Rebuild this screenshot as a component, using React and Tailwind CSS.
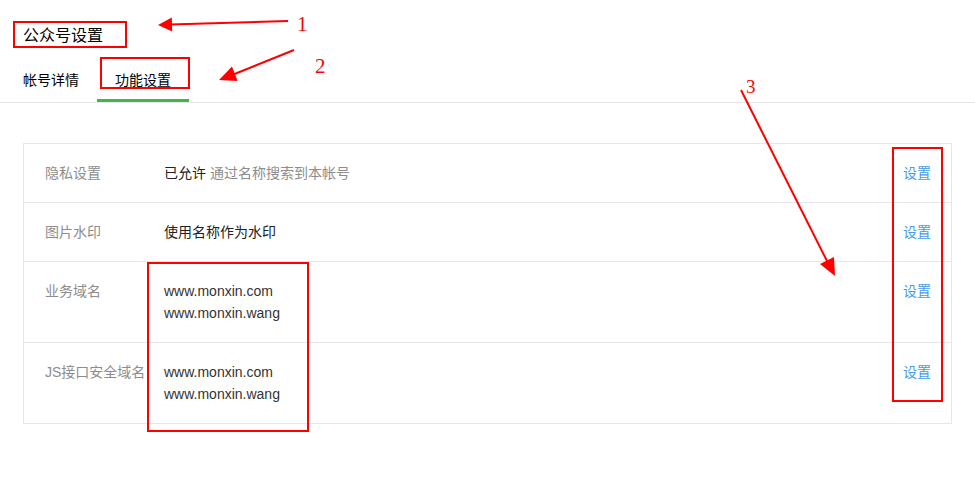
import React from "react";

const rows = [
  { label: "隐私设置", values: [["已允许", " 通过名称搜索到本帐号"]] },
  { label: "图片水印", values: [["使用名称作为水印", ""]] },
  { label: "业务域名", urls: ["www.monxin.com", "www.monxin.wang"] },
  { label: "JS接口安全域名", urls: ["www.monxin.com", "www.monxin.wang"] },
];

const Marks = () => (
  <div className="pointer-events-none absolute inset-0">
    <svg width="975" height="494" className="absolute left-0 top-0">
      <g fill="none" stroke="#ff0000" strokeWidth="2">
        <rect x="14" y="22" width="112" height="25" />
        <rect x="101" y="58" width="88" height="30" />
        <rect x="148" y="263" width="160" height="168" />
        <rect x="893" y="148" width="49" height="253" />
        <line x1="288" y1="21" x2="170" y2="24.6" />
        <line x1="294" y1="50" x2="234" y2="74.3" />
        <line x1="741" y1="90" x2="827" y2="261" />
      </g>
      <g fill="#ff0000">
        <polygon points="158,25 172.2,31.6 171.8,17.6" />
        <polygon points="219,80 237.6,81 232,66.5" />
        <polygon points="835,276 834,257 820,264" />
      </g>
    </svg>
    <span className="absolute left-[297px] top-[12px] text-[21px] leading-[24px] text-[#ff0000] [font-family:'Liberation_Serif',serif]">1</span>
    <span className="absolute left-[315px] top-[54px] text-[21px] leading-[24px] text-[#ff0000] [font-family:'Liberation_Serif',serif]">2</span>
    <span className="absolute left-[746px] top-[77px] text-[19px] leading-[20px] text-[#ff0000] [font-family:'Liberation_Serif',serif]">3</span>
  </div>
);

export default function App() {
  return (
    <div className="relative h-[494px] w-[975px] overflow-hidden bg-white text-[14px] text-[#222] [font-family:'Liberation_Sans','Noto_Sans_CJK_SC',sans-serif]">
      <div className="border-b border-[#e7e7eb]">
        <div className="pl-[23px] pt-[24px] text-[16px] leading-[24px] text-black">公众号设置</div>
        <div className="ml-[5px] flex">
          <div className="w-[92px] pt-[21px] pb-[11px] text-center leading-[22px] text-black">帐号详情</div>
          <div className="w-[92px] border-b-[3px] border-[#44b549] pt-[21px] pb-[8px] text-center leading-[22px] text-black">功能设置</div>
        </div>
      </div>

      <div className="mx-[23px] mt-[40px] border border-[#e7e7eb]">
        {rows.map((r, i) => (
          <div key={i} className={"flex py-[18px] leading-[22px] " + (i < rows.length - 1 ? "border-b border-[#e7e7eb]" : "")}>
            <div className="w-[140px] shrink-0 whitespace-nowrap pl-[21px] text-[#8d8d8d]">{r.label}</div>
            <div className="flex-1">
              {r.values &&
                r.values.map(([a, b], j) => (
                  <div key={j}>
                    <span className="text-[#222]">{a}</span>
                    <span className="text-[#8d8d8d]">{b}</span>
                  </div>
                ))}
              {r.urls && r.urls.map((u) => <div key={u} className="text-[#333]">{u}</div>)}
            </div>
            <div className="pr-[20px] text-[#459ae9]">设置</div>
          </div>
        ))}
      </div>

      <Marks />
    </div>
  );
}
